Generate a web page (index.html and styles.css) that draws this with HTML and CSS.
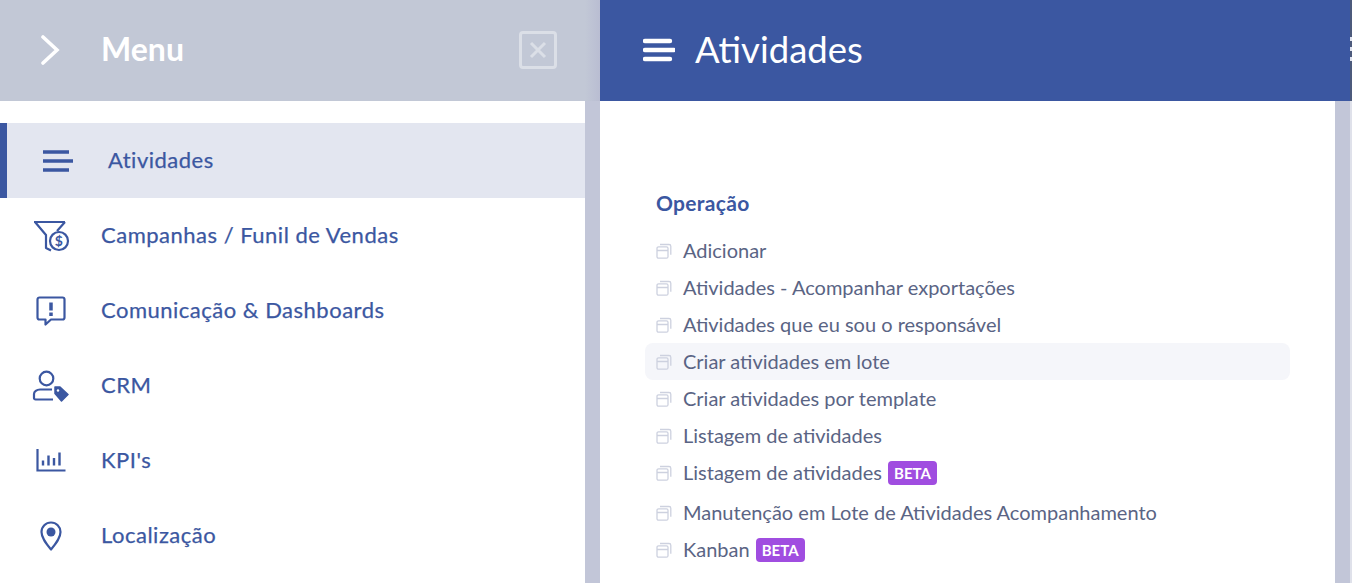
FILE: index.html
```html
<!DOCTYPE html>
<html lang="en">
<head>
    <meta charset="UTF-8">
    <meta name="viewport" content="width=device-width, initial-scale=1.0">
    <title>Atividades</title>
    <link rel="stylesheet" href="styles.css">
</head>
<body>
    <svg class="icon-defs" width="0" height="0">
        <symbol id="file-icon" viewBox="0 0 16 16">
            <rect x="1" y="3.800" width="11" height="11.400" rx="1.500" fill="none" stroke="currentColor" stroke-width="1.300"/>
            <path d="M1 7.500h11M4 1.500h9a1.800 1.800 0 0 1 1.800 1.800v8.500" fill="none" stroke="currentColor" stroke-width="1.300"/>
        </symbol>
    </svg>
    <div class="sidebar">
        <div class="sidebar-header">
            <svg class="chevron" width="20" height="30" viewBox="0 0 20 30">
                <path d="M3 2l14 13L3 28" fill="none" stroke="currentColor" stroke-width="3.600" stroke-linecap="round"/>
            </svg>
            <div class="sidebar-title">Menu</div>
            <div class="close-box">
                <svg width="18" height="18" viewBox="0 0 18 18">
                    <path d="M2 2l14 14M16 2L2 16" fill="none" stroke="currentColor" stroke-width="3"/>
                </svg>
            </div>
        </div>
        <div class="sidebar-body">
            <!-- Menu items -->
            <div class="menu-item active">
                <div class="menu-icon">
                    <svg width="30" height="24" viewBox="0 0 30 24">
                        <path d="M0 3h26M0 12h30M0 21h26" fill="none" stroke="currentColor" stroke-width="3.600"/>
                    </svg>
                </div>
                <span>Atividades</span>
            </div>
            <div class="menu-item">
                <div class="menu-icon">
                    <svg width="38" height="32" viewBox="0 0 38 32">
                        <path d="M2 2h31M3 2l11 13v13l5 2.500M33 2l-8 9" fill="none" stroke="currentColor" stroke-width="2.200" stroke-linejoin="round"/>
                        <circle cx="27" cy="21" r="9" fill="#fff" stroke="currentColor" stroke-width="2.200"/>
                        <text x="27" y="26" class="dollar">$</text>
                    </svg>
                </div>
                <span>Campanhas / Funil de Vendas</span>
            </div>
            <div class="menu-item">
                <div class="menu-icon">
                    <svg width="30" height="30" viewBox="0 0 30 30">
                        <path d="M3.500 1.500h23a2 2 0 0 1 2 2v18a2 2 0 0 1-2 2H15l-5.500 5v-5h-6a2 2 0 0 1-2-2v-18a2 2 0 0 1 2-2z" fill="none" stroke="currentColor" stroke-width="2.200" stroke-linejoin="round"/>
                        <path d="M15 6.500v8" stroke="currentColor" stroke-width="3.500"/>
                        <path d="M15 16.500v3.500" stroke="currentColor" stroke-width="3.500"/>
                    </svg>
                </div>
                <span>Comunicação &amp; Dashboards</span>
            </div>
            <div class="menu-item">
                <div class="menu-icon">
                    <svg width="38" height="32" viewBox="0 0 38 32">
                        <circle cx="14.500" cy="8.500" r="6.800" fill="none" stroke="currentColor" stroke-width="2.200"/>
                        <path d="M20 19.500H8a6 4.500 0 0 0-6 4.500v4a1.500 1.500 0 0 0 1.500 1.500H21" fill="none" stroke="currentColor" stroke-width="2.200"/>
                        <path d="M23 17h5l8 7.500-6.500 6.500-6.500-7.500z" fill="currentColor" stroke="currentColor" stroke-linejoin="round" stroke-width="1.500"/>
                        <circle cx="26" cy="20.500" r="1.200" fill="#fff"/>
                    </svg>
                </div>
                <span>CRM</span>
            </div>
            <div class="menu-item">
                <div class="menu-icon">
                    <svg width="30" height="24" viewBox="0 0 30 24">
                        <path d="M1.500 0v21.500h28" fill="none" stroke="currentColor" stroke-width="2.200"/>
                        <path d="M7 11.500v5M12.500 6.500v10M18 9v7.500M23.500 3.500v13" fill="none" stroke="currentColor" stroke-width="2.400"/>
                    </svg>
                </div>
                <span>KPI's</span>
            </div>
            <div class="menu-item">
                <div class="menu-icon">
                    <svg width="22" height="30" viewBox="0 0 22 30">
                        <path d="M11 28.500C6 22.500 1.500 17 1.500 11a9.500 9.500 0 0 1 19 0c0 6-4.500 11.500-9.500 17.500z" fill="none" stroke="currentColor" stroke-width="2.200" stroke-linejoin="round"/>
                        <circle cx="11" cy="11" r="4.500" fill="currentColor"/>
                    </svg>
                </div>
                <span>Localização</span>
            </div>
        </div>
    </div>

    <div class="main">
        <div class="main-header">
            <svg width="32" height="24" viewBox="0 0 32 24">
                <path d="M2 3h25M2 12h29M2 21h25" fill="none" stroke="currentColor" stroke-width="4.400" stroke-linecap="round"/>
            </svg>
            <div class="main-title">Atividades</div>
        </div>
        <div class="main-body">
            <div class="section-title">Operação</div>
            <div class="link-list">
                <div class="link-item"><svg class="file-icon"><use href="#file-icon"/></svg>Adicionar</div>
                <div class="link-item"><svg class="file-icon"><use href="#file-icon"/></svg>Atividades - Acompanhar exportações</div>
                <div class="link-item"><svg class="file-icon"><use href="#file-icon"/></svg>Atividades que eu sou o responsável</div>
                <div class="link-item hover"><svg class="file-icon"><use href="#file-icon"/></svg>Criar atividades em lote</div>
                <div class="link-item"><svg class="file-icon"><use href="#file-icon"/></svg>Criar atividades por template</div>
                <div class="link-item"><svg class="file-icon"><use href="#file-icon"/></svg>Listagem de atividades</div>
                <div class="link-item tall"><svg class="file-icon"><use href="#file-icon"/></svg>Listagem de atividades <span class="badge">BETA</span></div>
                <div class="link-item"><svg class="file-icon"><use href="#file-icon"/></svg>Manutenção em Lote de Atividades Acompanhamento</div>
                <div class="link-item"><svg class="file-icon"><use href="#file-icon"/></svg>Kanban <span class="badge">BETA</span></div>
            </div>
        </div>
    </div>

    <!-- Sliver of the next panel at the window edge -->
    <div class="next-panel">
        <div class="next-header">
            <div class="next-bar"></div>
            <div class="next-bar"></div>
            <div class="next-bar"></div>
        </div>
    </div>
</body>
</html>
```

FILE: styles.css
```css
html, body {
    height: 100%;
}
body {
    margin: 0;
    display: flex;
    overflow: hidden;
    background-color: #c2c6d8;
    font-family: Lato, sans-serif;
}
.icon-defs {
    position: absolute;
}
.sidebar {
    width: 600px;
    flex-shrink: 0;
    display: flex;
    flex-direction: column;
}
.sidebar-header {
    height: 101px;
    flex-shrink: 0;
    display: flex;
    align-items: center;
    padding: 0 43px 2px 40px;
    box-sizing: border-box;
    background-color: #c2c8d6;
    background-image: linear-gradient(to right, transparent 585px, #b9bdd2 600px);
    color: white;
}
.chevron {
    width: 20px;
    height: 30px;
}
.sidebar-title {
    margin-left: 41px;
    padding-bottom: 2px;
    flex: 1;
    font-size: 32px;
    font-weight: 700;
}
.close-box {
    width: 38px;
    height: 38px;
    box-sizing: border-box;
    border: 3px solid rgba(255, 255, 255, 0.42);
    border-radius: 4px;
    display: flex;
    align-items: center;
    justify-content: center;
    color: rgba(255, 255, 255, 0.42);
}
.sidebar-body {
    flex: 1;
    margin-right: 15px;
    padding-top: 22px;
    background-color: white;
}
.menu-item {
    height: 75px;
    box-sizing: border-box;
    padding-left: 31px;
    display: flex;
    align-items: center;
    gap: 30px;
    color: #3b57a1;
    font-size: 22px;
    letter-spacing: 0.5px;
    -webkit-text-stroke: 0.25px #3b57a1;
}
.menu-item span {
    padding-bottom: 2px;
}
.menu-item.active {
    border-left: 7px solid #3b57a1;
    background-color: #e3e6f0;
}
.menu-icon {
    width: 40px;
    display: flex;
    justify-content: center;
}
.main {
    width: 750px;
    flex-shrink: 0;
    display: flex;
    flex-direction: column;
}
.main-header {
    height: 101px;
    flex-shrink: 0;
    display: flex;
    align-items: center;
    gap: 20px;
    padding: 0 0 2px 43px;
    box-sizing: border-box;
    background-color: #3b57a1;
    color: white;
}
.main-title {
    padding-bottom: 2px;
    font-size: 36.500px;
}
.main-body {
    flex: 1;
    margin-right: 15px;
    padding: 89px 45px 0;
    background-color: white;
}
.section-title {
    padding-left: 11px;
    color: #3b57a1;
    font-size: 21px;
    font-weight: 700;
    letter-spacing: 0.3px;
    line-height: 26px;
}
.link-list {
    margin-top: 16px;
}
.link-item {
    height: 37px;
    padding: 0 0 2px 11px;
    box-sizing: border-box;
    display: flex;
    align-items: center;
    color: #5a6484;
    font-size: 20px;
    white-space: pre;
    border-radius: 8px;
}
.link-item.hover {
    background-color: #f5f6fa;
}
.link-item.tall {
    height: 40px;
    padding-bottom: 5px;
}
.file-icon {
    width: 16px;
    height: 16px;
    margin: 2px 11px 0 0;
    color: #cdd1df;
}
.badge {
    margin: 2px 0 0 1px;
    padding: 3px 6px;
    border-radius: 4px;
    background-color: #a04de0;
    color: white;
    font-size: 15px;
    font-weight: 700;
}
.dollar {
    fill: currentColor;
    font-size: 14px;
    font-weight: 700;
    text-anchor: middle;
    -webkit-text-stroke: 0;
}
.next-panel {
    flex: 1;
    background-color: #dfe1ea;
}
.next-header {
    height: 101px;
    padding-top: 37px;
    box-sizing: border-box;
    background-color: #4c5a7c;
}
.next-bar {
    height: 4px;
    margin-bottom: 6px;
    background-color: #dfe3f0;
}
```
